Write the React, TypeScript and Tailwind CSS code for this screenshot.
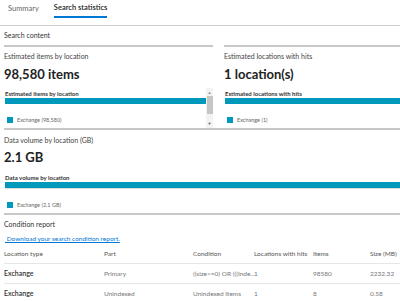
import React from "react";

const rows = [
  { type: "Exchange", part: "Primary", cond: "((size>=0) OR (((Inde...", hits: "1", items: "98580", size: "2232.32" },
  { type: "Exchange", part: "Unindexed", cond: "Unindexed Items", hits: "1", items: "8", size: "0.58" },
];

function Legend({ label }: { label: string }) {
  return (
    <div className="flex h-[8px] items-center pl-[3px]">
      <span className="h-[6px] w-[6px] bg-[#0099bc]" />
      <span className="ml-[4px] text-[5.5px] text-[#666]">{label}</span>
    </div>
  );
}

function Scrollbar() {
  return (
    <div className="flex w-[7px] flex-col items-center bg-[#f3f3f3]">
      <span className="mt-[1px] text-[4px] leading-[7px] text-[#888]">▲</span>
      <div className="h-[18px] w-[6px] bg-[#c6c6c6]" />
      <div className="flex-1" />
      <span className="mb-[1px] text-[4px] leading-[7px] text-[#555]">▼</span>
    </div>
  );
}

function StatCard({
  title,
  value,
  chartTitle,
  legend,
  scroll,
}: {
  title: string;
  value: string;
  chartTitle: string;
  legend: string;
  scroll?: boolean;
}) {
  return (
    <div className="flex flex-col border-t-2 border-[#c8c8c8]">
      <div className="flex h-[18px] items-center text-[7px] text-[#444]">{title}</div>
      <div className="flex h-[20px] items-center text-[13px] font-bold text-[#222]">{value}</div>
      <div className="flex h-[43px] pt-[3px]">
        <div className="flex flex-1 flex-col">
          <div className="flex h-[10px] items-center pl-[1px] text-[6px] font-bold text-[#333]">{chartTitle}</div>
          <div className="ml-[1px] h-[6px] bg-[#0099bc]" />
          <div className="h-[12px]" />
          <Legend label={legend} />
        </div>
        {scroll ? <Scrollbar /> : null}
      </div>
    </div>
  );
}

export default function App() {
  return (
    <div className="h-[301px] w-[400px] overflow-hidden bg-white font-['Lato',sans-serif] text-[#333]">
      {/* tabs */}
      <div className="flex h-[26px] items-start gap-[15px] border-b border-[#cfcfcf] pl-[8px]">
        <div className="flex h-[17px] items-center text-[7.5px] text-[#666]">Summary</div>
        <div className="flex h-[18px] items-center border-b-2 border-[#0078d4] text-[7.5px] font-semibold text-[#222]">
          Search statistics
        </div>
      </div>

      <div className="pl-[4px]">
        <div className="flex h-[19px] items-center text-[7px] text-[#333]">Search content</div>

        <div className="flex">
          <div className="w-[209px]">
            <StatCard
              title="Estimated items by location"
              value="98,580 items"
              chartTitle="Estimated items by location"
              legend="Exchange (98,580)"
              scroll
            />
          </div>
          <div className="ml-[11px] flex-1">
            <StatCard
              title="Estimated locations with hits"
              value="1 location(s)"
              chartTitle="Estimated locations with hits"
              legend="Exchange (1)"
            />
          </div>
        </div>

        {/* data volume */}
        <div className="flex flex-col border-t-2 border-[#c8c8c8]">
          <div className="flex h-[20px] items-center text-[7px] text-[#444]">Data volume by location (GB)</div>
          <div className="flex h-[16px] items-center text-[13px] font-bold text-[#222]">2.1 GB</div>
          <div className="h-[6px]" />
          <div className="flex h-[10px] items-center pl-[1px] text-[6px] font-bold text-[#333]">Data volume by location</div>
          <div className="ml-[1px] h-[6px] bg-[#0099bc]" />
          <div className="ml-[1px] h-[1px] bg-[#dcdcdc]" />
          <div className="h-[12px]" />
          <Legend label="Exchange (2.1 GB)" />
          <div className="h-[4px]" />
        </div>

        {/* condition report */}
        <div className="flex flex-col border-t-2 border-[#c8c8c8]">
          <div className="flex h-[19px] items-center text-[7px] text-[#333]">Condition report</div>
          <div className="flex h-[10px] items-center pl-[1px] text-[6.5px] text-[#0078d4] underline whitespace-pre">
            {" Download your search condition report."}
          </div>
          <div className="flex h-[20px] items-center border-b border-[#e6e6e6] text-[6.5px] text-[#555]">
            <div className="w-[100px]">Location type</div>
            <div className="w-[89px]">Part</div>
            <div className="w-[61px]">Condition</div>
            <div className="w-[59px]">Locations with hits</div>
            <div className="w-[57px]">Items</div>
            <div className="flex-1">Size (MB)</div>
          </div>
          {rows.map((r, i) => (
            <div
              key={i}
              className="flex h-[20px] items-center border-b border-[#e6e6e6] text-[6.5px] text-[#777]"
            >
              <div className="w-[100px] text-[7px] font-semibold text-[#333]">{r.type}</div>
              <div className="w-[89px]">{r.part}</div>
              <div className="w-[61px] whitespace-nowrap">{r.cond}</div>
              <div className="w-[59px]">{r.hits}</div>
              <div className="w-[57px]">{r.items}</div>
              <div className="flex-1">{r.size}</div>
            </div>
          ))}
        </div>
      </div>
    </div>
  );
}
